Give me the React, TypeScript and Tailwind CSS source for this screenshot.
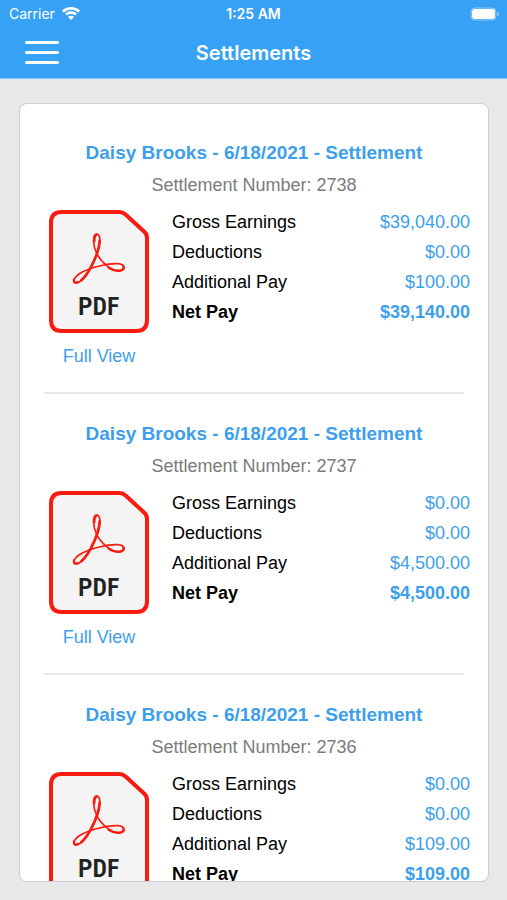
type Settlement = {
  number: number;
  title: string;
  gross: string;
  deductions: string;
  additional: string;
  net: string;
};

const settlements: Settlement[] = [
  {
    number: 2738,
    title: "Daisy Brooks - 6/18/2021 - Settlement",
    gross: "$39,040.00",
    deductions: "$0.00",
    additional: "$100.00",
    net: "$39,140.00",
  },
  {
    number: 2737,
    title: "Daisy Brooks - 6/18/2021 - Settlement",
    gross: "$0.00",
    deductions: "$0.00",
    additional: "$4,500.00",
    net: "$4,500.00",
  },
  {
    number: 2736,
    title: "Daisy Brooks - 6/18/2021 - Settlement",
    gross: "$0.00",
    deductions: "$0.00",
    additional: "$109.00",
    net: "$109.00",
  },
];

function WifiIcon() {
  return (
    <svg viewBox="0 0 54 42" className="h-[14px] w-[18px]" fill="currentColor" aria-hidden="true">
      <path d="M27 0C16.500 0 7 4 0 10.500L5 16.500C10.800 11.100 18.500 8 27 8S43.200 11.100 49 16.500L54 10.500C47 4 37.500 0 27 0Z" />
      <path d="M27 13C20.500 13 14.300 15.500 9.700 19.700L14.700 25.600C18 22.600 22.300 21 27 21S36 22.600 39.300 25.600L44.300 19.700C39.700 15.500 33.500 13 27 13Z" />
      <path d="M27 26C23.500 26 20.500 27.200 18 29.500L27 40L36 29.500C33.500 27.200 30.500 26 27 26Z" />
    </svg>
  );
}

function BatteryIcon() {
  return (
    <svg viewBox="0 0 30 14" className="h-[14px] w-[30px]" aria-hidden="true">
      <rect x="1" y="1" width="25" height="12" rx="4" fill="none" stroke="#fff" strokeOpacity="0.45" />
      <rect x="2" y="2" width="23" height="10" rx="3" fill="#fff" />
      <path d="M27.500 5v4c1-.4 1.600-1.100 1.600-2s-.6-1.600-1.600-2Z" fill="#fff" fillOpacity="0.5" />
    </svg>
  );
}

function PdfIcon() {
  return (
    <svg viewBox="0 0 300 369" className="h-[123px] w-[100px]" aria-hidden="true">
      <path
        d="M38 6H212Q222 6 229 13L286 65Q294 72 294 83V331Q294 363 262 363H38Q6 363 6 331V38Q6 6 38 6Z"
        fill="#f4f4f4"
        stroke="#fa1b10"
        strokeWidth="12"
      />
      <g transform="translate(-26 -30)" fill="none" stroke="#fa1b10" strokeLinecap="round" strokeLinejoin="round">
        <path
          d="M169 102C155 103 158 138 169 160C182 187 214 213 236 213C258 213 256 192 232 191C203 190 152 202 126 216C98 231 94 250 108 249C126 248 153 204 164 177C179 144 185 102 169 102Z"
          strokeWidth="5"
        />
        <path d="M178 122C177 146 166 175 151 203C143 218 133 232 123 241" strokeWidth="8" />
        <path d="M205 203C217 211 228 213 238 212C248 210 252 204 249 199" strokeWidth="7" />
        <path d="M162 124C162 112 165 104 170 103" strokeWidth="7" />
        <path d="M101 238C99 246 104 250 113 246" strokeWidth="7" />
      </g>
      <text
        x="149"
        y="315"
        textAnchor="middle"
        fontSize="77"
        fill="#222"
        className="font-['Roboto_Condensed','Roboto',sans-serif] font-semibold"
      >
        PDF
      </text>
    </svg>
  );
}

function AmountRow({ label, amount, strong }: { label: string; amount: string; strong?: boolean }) {
  return (
    <div className={strong ? "flex justify-between font-bold" : "flex justify-between"}>
      <dt className="text-black">{label}</dt>
      <dd className="text-[#3d9fec]">{amount}</dd>
    </div>
  );
}

function SettlementItem({ item }: { item: Settlement }) {
  return (
    <article>
      <h2 className="text-center text-[19px] leading-8 font-bold text-[#3d9fec]">{item.title}</h2>
      <p className="text-center text-[18px] leading-8 text-[#7b7b7b]">Settlement Number: {item.number}</p>
      <div className="mt-[6px] flex gap-[23px] pr-[18px] pl-[29px]">
        <a href={`#settlement-${item.number}`} className="flex flex-col items-center pt-[3px] text-[#3d9fec]">
          <PdfIcon />
          <span className="mt-[11px] text-[18px] leading-6">Full View</span>
        </a>
        <dl className="flex-1 text-[18px] leading-[30px]">
          <AmountRow label="Gross Earnings" amount={item.gross} />
          <AmountRow label="Deductions" amount={item.deductions} />
          <AmountRow label="Additional Pay" amount={item.additional} />
          <AmountRow label="Net Pay" amount={item.net} strong />
        </dl>
      </div>
      <hr className="mx-6 my-6 border-t-2 border-[#e6e6e6]" />
    </article>
  );
}

export default function App() {
  return (
    <div className="flex h-screen flex-col bg-[#e8e8e8] font-['Liberation_Sans',Arial,sans-serif]">
      <header className="border-b border-[#8cc8f8] bg-[#37a1f6] text-white">
        <div className="grid h-[27px] grid-cols-3 items-center px-[7px] font-['Inter',sans-serif] text-[14px]">
          <div className="flex items-center gap-[7px] pl-[2px]">
            <span>Carrier</span>
            <WifiIcon />
          </div>
          <span className="text-center font-semibold">1:25 AM</span>
          <div className="flex justify-end">
            <BatteryIcon />
          </div>
        </div>
        <div className="grid h-[51px] grid-cols-[1fr_auto_1fr] items-center px-[25px]">
          <button type="button" aria-label="Open menu" className="flex w-[34px] flex-col gap-[7px]">
            <span className="h-[3px] rounded-full bg-white" />
            <span className="h-[3px] rounded-full bg-white" />
            <span className="h-[3px] rounded-full bg-white" />
          </button>
          <h1 className="font-['Inter',sans-serif] text-[20px] font-semibold">Settlements</h1>
        </div>
      </header>
      <main className="flex min-h-0 flex-1 flex-col pt-6 pr-[18px] pb-[18px] pl-[19px]">
        <div className="flex-1 overflow-hidden rounded-lg border border-[#cfcfcf] bg-white pt-[33px]">
          {settlements.map((item) => (
            <SettlementItem key={item.number} item={item} />
          ))}
        </div>
      </main>
    </div>
  );
}
